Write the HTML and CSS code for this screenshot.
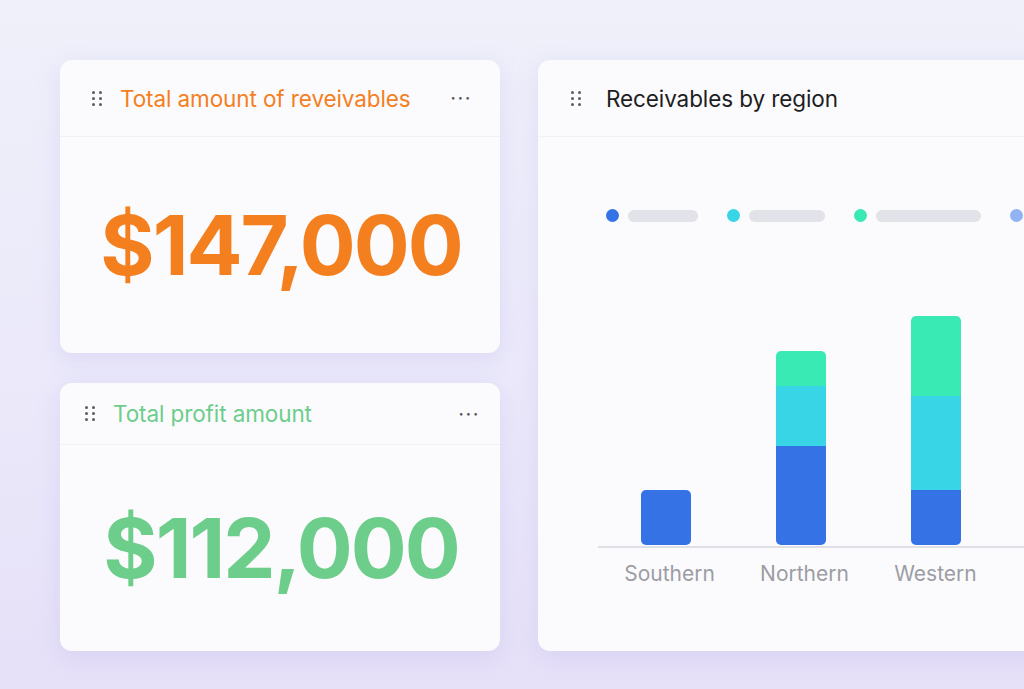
FILE: index.html
```html
<!DOCTYPE html>
<html lang="en">
<head>
    <meta charset="UTF-8">
    <title>Receivables dashboard</title>
    <link rel="stylesheet" href="styles.css">
</head>
<body>
<div class="board">
    <div class="stack">
        <div class="card card-receivables">
            <div class="card-head">
                <span class="grip"><i></i><i></i><i></i><i></i><i></i><i></i></span>
                <span class="card-title orange">Total amount of reveivables</span>
                <span class="more">&middot;&middot;&middot;</span>
            </div>
            <div class="card-body">
                <div class="big-number orange">$147,000</div>
            </div>
        </div>

        <div class="card card-profit">
            <div class="card-head">
                <span class="grip"><i></i><i></i><i></i><i></i><i></i><i></i></span>
                <span class="card-title green">Total profit amount</span>
                <span class="more">&middot;&middot;&middot;</span>
            </div>
            <div class="card-body">
                <div class="big-number green">$112,000</div>
            </div>
        </div>
    </div>

    <div class="card card-region">
        <div class="card-head">
            <span class="grip"><i></i><i></i><i></i><i></i><i></i><i></i></span>
            <span class="card-title">Receivables by region</span>
        </div>
        <div class="region-body">
            <div class="legend">
                <div class="legend-item"><span class="dot c-blue"></span><span class="legend-bar" style="width: 70px"></span></div>
                <div class="legend-item"><span class="dot c-cyan"></span><span class="legend-bar" style="width: 76px"></span></div>
                <div class="legend-item"><span class="dot c-mint"></span><span class="legend-bar" style="width: 105px"></span></div>
                <div class="legend-item"><span class="dot c-sky"></span><span class="legend-bar" style="width: 80px"></span></div>
            </div>

            <div class="chart">
                <div class="bars">
                    <div class="col">
                        <div class="bar">
                            <div class="seg c-blue" style="height: 55px"></div>
                        </div>
                    </div>
                    <div class="col">
                        <div class="bar">
                            <div class="seg c-mint" style="height: 35px"></div>
                            <div class="seg c-cyan" style="height: 60px"></div>
                            <div class="seg c-blue" style="height: 99px"></div>
                        </div>
                    </div>
                    <div class="col">
                        <div class="bar">
                            <div class="seg c-mint" style="height: 80px"></div>
                            <div class="seg c-cyan" style="height: 94px"></div>
                            <div class="seg c-blue" style="height: 55px"></div>
                        </div>
                    </div>
                </div>
                <div class="labels">
                    <span>Southern</span>
                    <span>Northern</span>
                    <span>Western</span>
                </div>
            </div>
        </div>
    </div>
</div>
</body>
</html>
```

FILE: styles.css
```css
html, body { margin: 0; height: 100%; }
body {
    font-family: Inter, "Noto Sans", sans-serif;
    background: linear-gradient(180deg, #eff0fa 0%, #ebe9fa 55%, #e6e0f8 100%);
    overflow: hidden;
}

.board { display: grid; grid-template-columns: 440px 520px; gap: 38px; padding: 60px 0 0 60px; }
.stack { display: flex; flex-direction: column; gap: 30px; }

.card {
    background-color: #fbfbfd;
    border-radius: 12px;
    box-shadow: 0 6px 24px rgba(150, 140, 230, 0.18);
    box-sizing: border-box;
}
.card-receivables { height: 293px; }
.card-profit { height: 268px; }
.card-region { height: 591px; }

.card-head {
    display: flex;
    align-items: center;
    height: 77px;
    padding: 0 28px 0 32px;
    border-bottom: 1px solid #f1f1f5;
    box-sizing: border-box;
}
.card-profit .card-head { height: 62px; padding-left: 25px; padding-right: 20px; }
.card-region .card-head { padding-left: 33px; }

.grip { display: grid; grid-template-columns: 3px 3px; gap: 3px 4px; margin-right: 18px; }
.grip i { width: 3px; height: 3px; border-radius: 50%; background-color: #5a5c63; }

.card-title { font-size: 22.5px; color: #1d1e22; letter-spacing: -0.1px; }
.card-region .card-title { margin-left: 7px; }
.orange { color: #f47f1f; }
.green { color: #6dcd8b; }

.more { margin-left: auto; font-size: 20px; color: #55575d; letter-spacing: 1.5px; line-height: 1; }

.card-body { display: flex; align-items: center; justify-content: center; height: calc(100% - 77px); }
.card-profit .card-body { height: calc(100% - 62px); }
.big-number { font-size: 83px; font-weight: 700; letter-spacing: -2px; padding-left: 2px; }

.region-body { padding: 72px 0 0 60px; }

.legend { display: flex; gap: 29px; margin-left: 8px; }
.legend-item { display: flex; align-items: center; gap: 9px; }
.dot { width: 13px; height: 13px; border-radius: 50%; }
.legend-bar { height: 12px; border-radius: 6px; background-color: #e2e3e8; }

.c-blue { background-color: #3572e6; }
.c-cyan { background-color: #38d5e7; }
.c-mint { background-color: #3aeab4; }
.c-sky { background-color: #93b2f3; }

.chart { margin-top: 84px; }
.bars { display: flex; align-items: flex-end; height: 240px; border-bottom: 2px solid #dfe0e5; }
.col { width: 135px; display: flex; justify-content: center; }
.bar { width: 50px; border-radius: 5px; overflow: hidden; display: flex; flex-direction: column; margin-bottom: 1px; }

.labels { display: flex; padding-top: 13px; }
.labels span { width: 135px; text-align: center; font-size: 21px; color: #9c9da4; padding-left: 8px; box-sizing: border-box; }
.labels span:last-child { padding-left: 0; }
```
